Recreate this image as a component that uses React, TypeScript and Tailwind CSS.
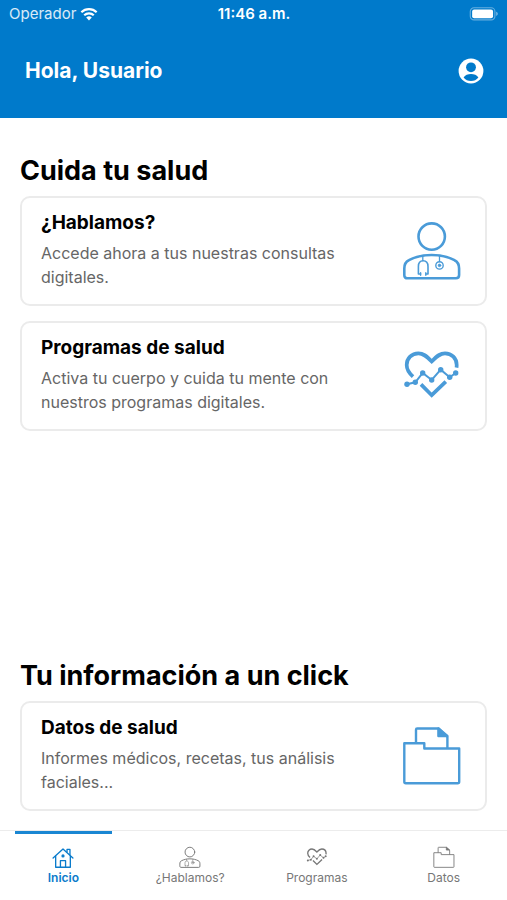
import { useState } from "react";
import type { ComponentType } from "react";
import clsx from "clsx";

type IconProps = { className?: string };

function WifiIcon({ className }: IconProps) {
  return (
    <svg viewBox="0 0 20 15" className={className} fill="none" aria-hidden="true">
      <g stroke="currentColor" strokeWidth="2.4">
        <path d="M1.5 5.6a12 12 0 0 1 17 0" />
        <path d="M4.7 9a7.5 7.5 0 0 1 10.6 0" />
      </g>
      <path d="M10 14.6l-3.1-3.2a4.4 4.4 0 0 1 6.2 0z" fill="currentColor" />
    </svg>
  );
}

function BatteryIcon({ className }: IconProps) {
  return (
    <svg viewBox="0 0 31 15" className={className} aria-hidden="true">
      <rect x="0.8" y="0.8" width="26.4" height="13" rx="4" fill="none" stroke="currentColor" strokeOpacity="0.4" strokeWidth="1.2" />
      <rect x="2.8" y="2.6" width="22.4" height="9.4" rx="2.2" fill="currentColor" />
      <path d="M28.6 5v4.6c1-.4 1.6-1.3 1.6-2.3s-.6-1.9-1.6-2.3z" fill="currentColor" fillOpacity="0.5" />
    </svg>
  );
}

function AccountIcon({ className }: IconProps) {
  return (
    <svg viewBox="0 0 26 26" className={className} aria-hidden="true">
      <circle cx="13" cy="13" r="12.4" fill="currentColor" />
      <g className="fill-[#007acb]">
        <circle cx="13" cy="9.3" r="4.9" />
        <path d="M5.6 19.6c1.3-2.4 4.5-3.5 7.4-3.5s6.1 1.1 7.4 3.5c-1.8 2.4-4.4 3.5-7.4 3.5s-5.6-1.1-7.4-3.5z" />
      </g>
    </svg>
  );
}

function HomeIcon({ className }: IconProps) {
  return (
    <svg viewBox="0 0 60 60" className={className} fill="none" stroke="currentColor" strokeWidth="3.6" strokeLinejoin="round" strokeLinecap="round" aria-hidden="true">
      <path d="M3 33L30 8l27 25" />
      <path d="M10 28v30h40V28" />
      <path d="M41 16V9h8v15" />
      <path d="M23 58V40h14v18" />
      <circle cx="30" cy="27" r="2.6" fill="currentColor" />
    </svg>
  );
}

function DoctorIcon({ className }: IconProps) {
  return (
    <svg viewBox="0 0 60 60" className={className} fill="none" stroke="currentColor" strokeLinejoin="round" strokeLinecap="round" aria-hidden="true">
      <circle cx="29.7" cy="16.6" r="13.2" strokeWidth="2.6" />
      <path d="M2.3 48.4c0-4 1.2-6.6 4.6-8.2 6.5-3.4 14-5.2 22.8-5.2s16.3 1.8 22.8 5.2c3.4 1.6 4.6 4.2 4.6 8.2V55c0 2.2-1.1 3.3-3.2 3.3H5.5c-2.1 0-3.2-1.1-3.2-3.3z" strokeWidth="2.6" />
      <path d="M20.8 36v4.5" strokeWidth="1.3" />
      <path d="M18.6 54h-2.2v-7.6c0-3.5 1.7-5.7 4.7-5.7s4.9 2.2 4.9 5.7V54h-2.2" strokeWidth="1.6" />
      <path d="M18.6 52.8v2.4M23.8 52.8v2.4" strokeWidth="1.4" />
      <path d="M37.5 36v5.5" strokeWidth="1.3" />
      <circle cx="37.5" cy="45.4" r="3.7" strokeWidth="1.4" />
      <circle cx="37.5" cy="45.4" r="1.3" fill="currentColor" strokeWidth="0.8" />
    </svg>
  );
}

const PULSE = [
  [5, 39.3],
  [13.3, 37.3],
  [20.7, 28],
  [29.7, 35],
  [38.7, 24.7],
  [47.7, 32.3],
  [53.7, 28],
];

function HeartIcon({ className }: IconProps) {
  return (
    <svg viewBox="0 0 60 60" className={className} fill="none" stroke="currentColor" aria-hidden="true">
      <path d="M11 31.6C7.2 28.2 4.7 24.5 4.7 20c0-6.8 5-11.7 11.7-11.7 4.6 0 7.6 2 13.3 8.1 5.7-6.1 8.7-8.1 13.3-8.1 6.7 0 11.7 4.9 11.7 11.7 0 .9 0 1.6-.2 2.6" strokeWidth="3.7" />
      <path d="M19 39.4l10.7 10.8 14.1-13.6" strokeWidth="3.7" />
      <polyline points={PULSE.map((p) => p.join(",")).join(" ")} strokeWidth="2" />
      {PULSE.map(([x, y]) => (
        <circle key={x} cx={x} cy={y} r="2.7" fill="currentColor" stroke="none" />
      ))}
    </svg>
  );
}

function FolderIcon({ className }: IconProps) {
  return (
    <svg viewBox="0 0 60 60" className={className} fill="none" stroke="currentColor" strokeWidth="2.4" strokeLinejoin="round" aria-hidden="true">
      <path d="M2.3 18.3h20v5.2h34.9v33.2c0 1-.5 1.5-1.5 1.5H3.8c-1 0-1.5-.5-1.5-1.5z" />
      <path d="M14 18.3V4.7c0-.8.4-1.2 1.2-1.2h21.6l8.6 8.5v11.5" />
      <path d="M36.4 3.5V11h9z" fill="currentColor" />
    </svg>
  );
}

type CardProps = {
  title: string;
  text: string;
  Icon: ComponentType<IconProps>;
};

const CARE_CARDS: CardProps[] = [
  {
    title: "¿Hablamos?",
    text: "Accede ahora a tus nuestras consultas digitales.",
    Icon: DoctorIcon,
  },
  {
    title: "Programas de salud",
    text: "Activa tu cuerpo y cuida tu mente con nuestros programas digitales.",
    Icon: HeartIcon,
  },
];

const INFO_CARDS: CardProps[] = [
  {
    title: "Datos de salud",
    text: "Informes médicos, recetas, tus análisis faciales...",
    Icon: FolderIcon,
  },
];

const TABS = [
  { id: "inicio", label: "Inicio", Icon: HomeIcon },
  { id: "hablamos", label: "¿Hablamos?", Icon: DoctorIcon },
  { id: "programas", label: "Programas", Icon: HeartIcon },
  { id: "datos", label: "Datos", Icon: FolderIcon },
];

function Card({ title, text, Icon }: CardProps) {
  return (
    <a
      href="#"
      className="flex items-center justify-between rounded-[10px] border-2 border-[#ebebeb] bg-white pt-[13px] pr-[23px] pb-[15px] pl-[19px]"
    >
      <div className="max-w-[320px]">
        <h3 className="text-[19px] leading-6 font-bold text-black">{title}</h3>
        <p className="mt-1.5 text-base leading-6 text-[#666666]">{text}</p>
      </div>
      <Icon className="size-[60px] shrink-0 text-[#4a9bd8]" />
    </a>
  );
}

function Section({ title, cards }: { title: string; cards: CardProps[] }) {
  return (
    <section>
      <h2 className="mb-[7px] text-[27px] leading-9 font-bold text-black">{title}</h2>
      <div className="flex flex-col gap-[15px]">
        {cards.map((card) => (
          <Card key={card.title} {...card} />
        ))}
      </div>
    </section>
  );
}

export default function App() {
  const [active, setActive] = useState("inicio");

  return (
    <div className="flex min-h-screen flex-col bg-white font-['Inter','Open_Sans',sans-serif]">
      <header className="bg-[#007acb] text-white">
        <div className="grid h-7 grid-cols-3 items-center pr-2 pl-[9px] text-[15px]">
          <div className="flex items-center gap-1 text-white/85">
            Operador
            <WifiIcon className="h-[14px] w-[18px] text-white" />
          </div>
          <div className="text-center font-semibold">11:46 a.m.</div>
          <BatteryIcon className="h-[14px] w-[30px] justify-self-end" />
        </div>
        <div className="flex items-center justify-between pt-[29px] pr-[23px] pb-[33px] pl-[25px]">
          <h1 className="text-[21px] leading-7 font-bold">Hola, Usuario</h1>
          <button type="button" aria-label="Perfil">
            <AccountIcon className="size-[26px]" />
          </button>
        </div>
      </header>

      <main className="flex flex-1 flex-col justify-between gap-8 px-5 pt-[35px] pb-[19px]">
        <Section title="Cuida tu salud" cards={CARE_CARDS} />
        <Section title="Tu información a un click" cards={INFO_CARDS} />
      </main>

      <nav className="grid grid-cols-4 border-t border-[#ececec] bg-white">
        {TABS.map(({ id, label, Icon }) => (
          <button
            key={id}
            type="button"
            onClick={() => setActive(id)}
            aria-current={active === id ? "page" : undefined}
            className={clsx(
              "flex flex-col items-center pb-3.5 text-xs leading-4",
              active === id ? "font-semibold text-[#0a7bcb]" : "text-[#777777]",
            )}
          >
            <span
              className={clsx(
                "mb-3 h-[3px] w-[97px]",
                active === id ? "bg-[#1a86d2]" : "bg-transparent",
              )}
            />
            <Icon className="size-[22px]" />
            <span className="mt-0.5">{label}</span>
          </button>
        ))}
      </nav>
    </div>
  );
}
